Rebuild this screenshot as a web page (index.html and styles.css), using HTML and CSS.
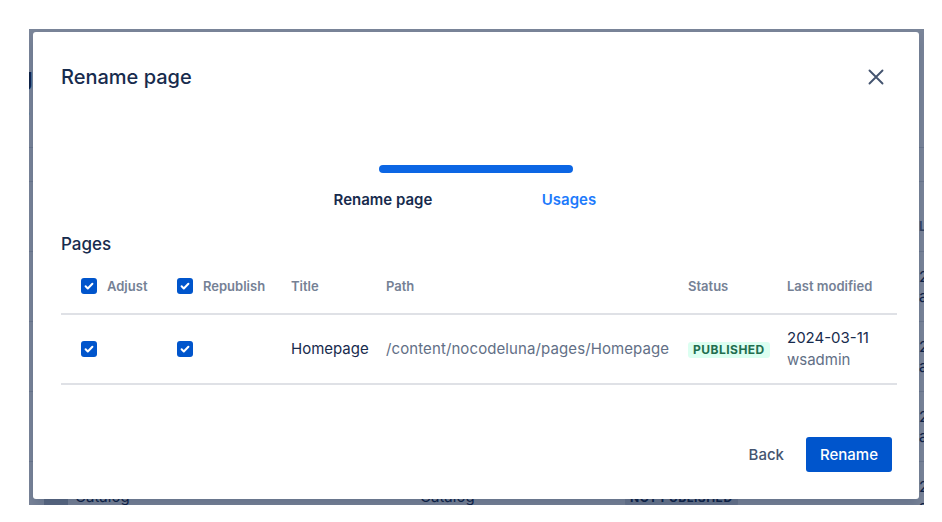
FILE: index.html
```html
<!DOCTYPE html>
<html lang="en">
<head>
    <meta charset="UTF-8">
    <title>Rename page</title>
    <link rel="stylesheet" href="styles.css">
</head>
<body>
<div class="app">
    <!-- page behind the dialog -->
    <div class="page">
        <h1 class="page-title">Catalog</h1>
        <p class="page-sub">Site pages</p>
        <div class="page-tabs"></div>
        <div class="list">
            <div class="list-row list-head">
                <span></span><span></span><span></span><span></span><span>Last modified</span>
            </div>
            <div class="list-row">
                <span></span><span></span><span></span><span></span>
                <span class="stack">2024-03-11<br>admin</span>
            </div>
            <div class="list-row">
                <span></span><span></span><span></span><span></span>
                <span class="stack">2024-03-11<br>admin</span>
            </div>
            <div class="list-row">
                <span></span><span></span><span></span><span></span>
                <span class="stack">2024-03-11<br>admin</span>
            </div>
            <div class="list-row">
                <span class="ico"></span><span>Catalog</span><span>Catalog</span>
                <span><span class="lozenge lozenge-grey">Not published</span></span>
                <span class="stack">2024-03-11<br>admin</span>
            </div>
        </div>
    </div>

    <div class="blanket">
        <div class="modal">
            <div class="modal-header">
                <h2 class="modal-title">Rename page</h2>
                <button class="close-btn" aria-label="Close">
                    <svg width="16" height="16" viewBox="0 0 16 16">
                        <path d="M1.5 1.5l13 13M14.5 1.5l-13 13" stroke="#44546f" stroke-width="1.9" stroke-linecap="round"/>
                    </svg>
                </button>
            </div>

            <div class="steps">
                <div class="steps-bar"></div>
                <div class="steps-labels">
                    <span class="step">Rename page</span>
                    <span class="step step-active">Usages</span>
                </div>
            </div>

            <h3 class="section-title">Pages</h3>

            <div class="usages">
                <div class="usage-row usage-head">
                    <label class="check-cell"><span class="check"><svg width="16" height="16" viewBox="0 0 16 16"><path d="M4.6 8.3l2.2 2.2 4.6-4.8" fill="none" stroke="#fff" stroke-width="2" stroke-linecap="round" stroke-linejoin="round"/></svg></span>Adjust</label>
                    <label class="check-cell"><span class="check"><svg width="16" height="16" viewBox="0 0 16 16"><path d="M4.6 8.3l2.2 2.2 4.6-4.8" fill="none" stroke="#fff" stroke-width="2" stroke-linecap="round" stroke-linejoin="round"/></svg></span>Republish</label>
                    <span>Title</span>
                    <span>Path</span>
                    <span>Status</span>
                    <span>Last modified</span>
                </div>
                <div class="usage-row">
                    <span class="check-cell"><span class="check"><svg width="16" height="16" viewBox="0 0 16 16"><path d="M4.6 8.3l2.2 2.2 4.6-4.8" fill="none" stroke="#fff" stroke-width="2" stroke-linecap="round" stroke-linejoin="round"/></svg></span></span>
                    <span class="check-cell"><span class="check"><svg width="16" height="16" viewBox="0 0 16 16"><path d="M4.6 8.3l2.2 2.2 4.6-4.8" fill="none" stroke="#fff" stroke-width="2" stroke-linecap="round" stroke-linejoin="round"/></svg></span></span>
                    <span class="title-cell">Homepage</span>
                    <span class="path-cell">/content/nocodeluna/pages/Homepage</span>
                    <span><span class="lozenge lozenge-green">Published</span></span>
                    <span class="modified-cell">2024-03-11<br><span class="muted">wsadmin</span></span>
                </div>
            </div>

            <div class="modal-footer">
                <button class="btn btn-subtle">Back</button>
                <button class="btn btn-primary">Rename</button>
            </div>
        </div>
    </div>
</div>
</body>
</html>
```

FILE: styles.css
```css
body {
    margin: 0;
    background: #ffffff;
    font-family: Inter, "Noto Sans", sans-serif;
    color: #172b4d;
}

.app {
    position: relative;
    width: 895px;
    height: 476px;
    margin: 29px 0 0 29px;
    overflow: hidden;
    background: #ffffff;
}

/* page behind the blanket */
.page {
    padding-top: 34px;
}

.page-title {
    margin: 0 0 0 -86px;
    font-size: 24px;
    font-weight: 600;
    line-height: 28px;
}

.page-sub {
    margin: 12px 0 0 -64px;
    font-size: 13px;
    line-height: 16px;
    color: #626f86;
}

.page-tabs {
    height: 33px;
    margin-top: 28px;
    border-top: 1px solid #dfe1e6;
    border-bottom: 1px solid #dfe1e6;
}

.list-row {
    display: grid;
    grid-template-columns: 31px 345px 205px 294px 1fr;
    align-items: center;
    height: 69px;
    padding-left: 15px;
    border-bottom: 1px solid #dfe1e6;
    font-size: 15px;
    white-space: nowrap;
}

.list-head {
    height: 51px;
    padding-top: 18px;
    font-size: 13px;
    font-weight: 600;
    color: #626f86;
}

.ico {
    width: 24px;
    height: 24px;
    border-radius: 3px;
    background: #c1c7d0;
}

.stack {
    line-height: 20px;
    color: #172b4d;
}

/* blanket + dialog */
.blanket {
    position: absolute;
    inset: 0;
    display: flex;
    padding: 3px 5px 6px 4px;
    background: rgba(9, 30, 66, 0.54);
}

.modal {
    flex: 1;
    display: flex;
    flex-direction: column;
    padding: 0 28px 27px;
    background: #ffffff;
    border-radius: 3px;
    box-shadow: 0 8px 12px rgba(9, 30, 66, 0.15);
}

.modal-header {
    display: flex;
    justify-content: space-between;
    align-items: center;
    padding-top: 29px;
}

.modal-title {
    margin: 0;
    font-size: 20px;
    font-weight: 500;
    line-height: 32px;
}

.close-btn {
    width: 32px;
    height: 32px;
    margin-right: -1px;
    display: flex;
    align-items: center;
    justify-content: center;
    border: none;
    background: none;
    padding: 0;
    cursor: pointer;
}

.steps {
    margin: 72px auto 0;
    width: 372px;
}

.steps-bar {
    width: 194px;
    height: 8px;
    margin: 0 auto;
    border-radius: 4px;
    background: #0c66e4;
}

.steps-labels {
    display: grid;
    grid-template-columns: 1fr 1fr;
    margin-top: 17px;
    text-align: center;
    font-size: 15px;
    font-weight: 600;
    line-height: 20px;
}

.step-active {
    color: #1d7afc;
}

.section-title {
    margin: 22px 0 0;
    font-size: 17px;
    font-weight: 500;
    line-height: 24px;
}

.usages {
    margin: 5px -6px 0 0;
}

.usage-row {
    display: grid;
    grid-template-columns: 96px 114px 95px 302px 99px 1fr;
    align-items: center;
    padding: 12px 0 12px 20px;
    border-bottom: 2px solid #dfe1e6;
    font-size: 15px;
    line-height: 22px;
}

.usage-head {
    padding: 15px 0 17px 20px;
    font-size: 13px;
    font-weight: 600;
    line-height: 20px;
    color: #758195;
}

.check-cell {
    display: flex;
    align-items: center;
    gap: 10px;
}

.check {
    display: flex;
    width: 16px;
    height: 16px;
    border-radius: 3px;
    background: #0055cc;
}

.title-cell {
    color: #172b4d;
}

.path-cell {
    letter-spacing: 0.1px;
}

.path-cell,
.muted {
    color: #626f86;
}

.lozenge {
    display: inline-block;
    padding: 0 5px;
    border-radius: 3px;
    font-size: 12px;
    font-weight: 700;
    line-height: 16px;
    letter-spacing: 0.04em;
    text-transform: uppercase;
}

.lozenge-green {
    background: #dcfff1;
    color: #216e4e;
}

.lozenge-grey {
    background: #dfe1e6;
    color: #172b4d;
}

.modal-footer {
    display: flex;
    justify-content: flex-end;
    gap: 8px;
    margin-top: auto;
    margin-right: -1px;
}

.btn {
    height: 35px;
    padding: 0 14px;
    border: none;
    border-radius: 3px;
    font-family: inherit;
    font-size: 15px;
    font-weight: 500;
    cursor: pointer;
}

.btn-subtle {
    background: none;
    color: #44546f;
}

.btn-primary {
    background: #0055cc;
    color: #ffffff;
}
```
